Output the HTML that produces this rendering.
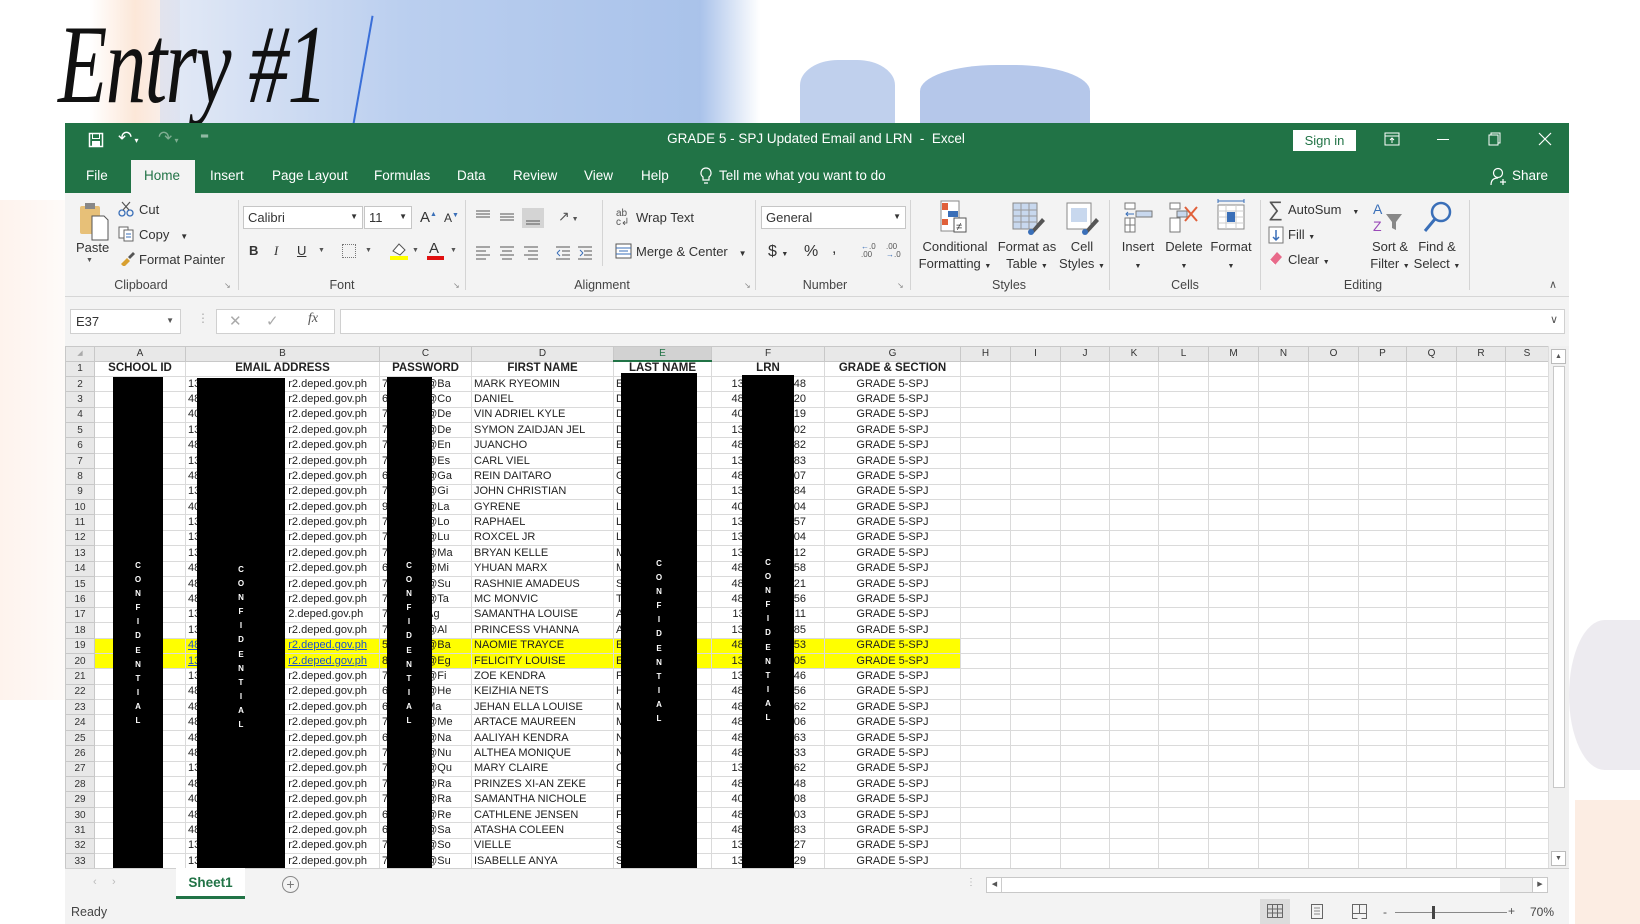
<!DOCTYPE html>
<html><head><meta charset="utf-8"><style>
*{margin:0;padding:0;box-sizing:border-box}
body{width:1640px;height:924px;overflow:hidden;background:#fff;font-family:"Liberation Sans",sans-serif;position:relative;color:#222}
.a{position:absolute;white-space:nowrap}
.ui{font-size:13px;color:#333}
.lbl{font-size:12.5px;color:#444;transform:translateX(-50%)}
.sep{position:absolute;width:1px;background:#d4d4d4;top:200px;height:90px}
.ct{text-align:center;transform:translateX(-50%);font-size:13px;color:#333;line-height:17px}
table{position:absolute;left:65px;top:346px;border-collapse:collapse;table-layout:fixed;font-size:11px;font-family:"Liberation Sans",sans-serif}
td,th{height:15.4px;border:1px solid #dadada;padding:0 2px;overflow:hidden;white-space:nowrap;line-height:13px}
th{background:#e8e8e8;font-weight:normal;font-size:10px;color:#333;border-color:#c8c8c8}
thead th{text-align:center;height:14px}
tbody th{text-align:center}
td.g{text-align:center}
td.f{text-align:right;padding-right:18px}
.s1{display:inline-block;width:88px}
.s2{display:inline-block;width:38px}
.s3{display:inline-block;width:50px}
tr.h1 td{font-weight:bold;text-align:center;font-size:11.5px}
tr.y td:nth-child(n+2):nth-child(-n+8){background:#ffff00}
tr.y td:nth-child(3){color:#1a4fd0;text-decoration:underline}
.blk{position:absolute;background:#000}
.cf{position:absolute;color:#fff;font-size:8px;font-weight:bold;width:10px;text-align:center;line-height:14.1px}
</style></head><body>
<!-- background decor -->
<div class="a" style="left:90px;top:0;width:90px;height:123px;background:linear-gradient(90deg,rgba(250,220,200,.0),rgba(250,215,190,.6),rgba(240,225,225,.4))"></div>
<div class="a" style="left:160px;top:0;width:600px;height:123px;background:linear-gradient(90deg,rgba(210,220,240,.6),rgba(170,195,235,.8) 40%,rgba(160,188,232,.9) 90%,rgba(190,205,235,0))"></div>
<div class="a" style="left:800px;top:60px;width:95px;height:63px;background:rgba(165,188,230,.7);border-radius:40% 40% 0 0"></div>
<div class="a" style="left:920px;top:65px;width:170px;height:58px;background:rgba(150,175,225,.7);border-radius:45% 45% 0 0"></div>
<div class="a" style="left:0;top:200px;width:66px;height:500px;background:linear-gradient(90deg,rgba(250,215,195,.3),rgba(250,215,195,.1))"></div>
<div class="a" style="left:1569px;top:620px;width:71px;height:150px;background:rgba(220,215,225,.5);border-radius:50% 0 0 50%"></div>
<div class="a" style="left:1575px;top:800px;width:65px;height:124px;background:rgba(250,220,200,.5)"></div>
<div class="a" style="left:58px;top:5px;font-family:'Liberation Serif',serif;font-style:italic;font-size:112px;line-height:120px;color:#111;transform:scaleX(.72);transform-origin:left;letter-spacing:-2px">Entry #1</div>
<div class="a" style="left:362px;top:15px;width:2px;height:110px;background:#3a6fd8;transform:rotate(10deg)"></div>

<!-- title bar -->
<div class="a" style="left:65px;top:123px;width:1504px;height:70px;background:#217346"></div>
<div class="a" style="left:131px;top:160px;width:64px;height:34px;background:#f3f3f3"></div>
<div class="a" style="left:65px;top:193px;width:1504px;height:104px;background:#f3f3f3;border-bottom:1px solid #d6d6d6"></div>
<svg class="a" style="left:88px;top:132px" width="16" height="16"><rect x="1.5" y="1.5" width="13" height="13" fill="none" stroke="#fff" stroke-width="1.5"/><rect x="4.5" y="1.5" width="7" height="5" fill="none" stroke="#fff"/><rect x="4" y="9" width="8" height="5" fill="#fff"/></svg>
<div class="a" style="left:118px;top:128px;color:#fff;font-size:17px">&#x21B6;<span style="font-size:8px"> ▾</span></div>
<div class="a" style="left:158px;top:128px;color:#7fae92;font-size:17px">&#x21B7;<span style="font-size:8px"> ▾</span></div>
<div class="a" style="left:201px;top:131px;color:#fff;font-size:10px">&#x2550;</div>
<div class="a" style="left:816px;top:131px;color:#fff;font-size:13.5px;transform:translateX(-50%)">GRADE 5 - SPJ Updated Email and LRN&nbsp; -&nbsp; Excel</div>
<div class="a" style="left:1293px;top:130px;width:63px;height:21px;background:#fff;color:#217346;font-size:13px;text-align:center;line-height:21px">Sign in</div>
<svg class="a" style="left:1384px;top:132px" width="16" height="14"><rect x="1" y="1" width="14" height="12" fill="none" stroke="#fff"/><line x1="1" y1="4" x2="15" y2="4" stroke="#fff"/><path d="M8 11V6M6 8l2-2 2 2" stroke="#fff" fill="none"/></svg>
<div class="a" style="left:1437px;top:139px;width:12px;height:1px;background:#fff"></div>
<svg class="a" style="left:1488px;top:132px" width="14" height="14"><rect x="1" y="3" width="9" height="10" fill="none" stroke="#fff"/><path d="M3 3V1h9v10h-2" fill="none" stroke="#fff"/></svg>
<svg class="a" style="left:1538px;top:132px" width="14" height="14"><path d="M1 1L13 13M13 1L1 13" stroke="#fff" stroke-width="1.2"/></svg>
<div class="a" style="left:86px;top:168px;color:#fff;font-size:13.5px">File</div>
<div class="a" style="left:144px;top:168px;color:#217346;font-size:13.5px">Home</div>
<div class="a" style="left:210px;top:168px;color:#fff;font-size:13.5px">Insert</div>
<div class="a" style="left:272px;top:168px;color:#fff;font-size:13.5px">Page Layout</div>
<div class="a" style="left:374px;top:168px;color:#fff;font-size:13.5px">Formulas</div>
<div class="a" style="left:457px;top:168px;color:#fff;font-size:13.5px">Data</div>
<div class="a" style="left:513px;top:168px;color:#fff;font-size:13.5px">Review</div>
<div class="a" style="left:584px;top:168px;color:#fff;font-size:13.5px">View</div>
<div class="a" style="left:641px;top:168px;color:#fff;font-size:13.5px">Help</div>
<svg class="a" style="left:699px;top:167px" width="14" height="19"><path d="M7 1a5 5 0 0 0-3 9v3h6v-3a5 5 0 0 0-3-9zM5 16h4" fill="none" stroke="#fff" stroke-width="1.2"/></svg>
<div class="a" style="left:719px;top:168px;color:#fff;font-size:13.5px">Tell me what you want to do</div>
<svg class="a" style="left:1490px;top:167px" width="18" height="19"><circle cx="8" cy="6" r="4.5" fill="none" stroke="#fff" stroke-width="1.2"/><path d="M1 18c0-5 3-7 7-7M13 12v6M10 15h6" fill="none" stroke="#fff" stroke-width="1.2"/></svg>
<div class="a" style="left:1512px;top:168px;color:#fff;font-size:13.5px">Share</div>

<!-- ribbon: clipboard -->
<svg class="a" style="left:78px;top:202px" width="32" height="40"><rect x="2" y="4" width="20" height="28" rx="2" fill="#e7c078"/><rect x="7" y="1" width="10" height="6" fill="#888"/><path d="M14 14h12l4 4v20H14z" fill="#fff" stroke="#555"/></svg>
<div class="a ui" style="left:76px;top:240px">Paste</div>
<div class="a" style="left:86px;top:257px;font-size:7px;color:#555">▼</div>
<svg class="a" style="left:118px;top:201px" width="16" height="16"><circle cx="4" cy="12" r="3" fill="none" stroke="#3a6fb8" stroke-width="1.3"/><circle cx="12" cy="12" r="3" fill="none" stroke="#3a6fb8" stroke-width="1.3"/><path d="M5 9L12 1M11 9L4 1" stroke="#555" stroke-width="1.2"/></svg>
<div class="a ui" style="left:139px;top:202px">Cut</div>
<svg class="a" style="left:118px;top:226px" width="16" height="16"><rect x="1" y="1" width="9" height="11" fill="#fff" stroke="#666"/><rect x="6" y="4" width="9" height="11" fill="#fff" stroke="#666"/><path d="M8 8h5M8 11h5" stroke="#3a6fb8"/></svg>
<div class="a ui" style="left:139px;top:227px">Copy&nbsp;&nbsp; <span style="font-size:8px">▼</span></div>
<svg class="a" style="left:119px;top:250px" width="16" height="16"><path d="M2 14l6-6 3 3-6 6z" fill="#d8a030"/><path d="M9 7l5-5 2 2-5 5z" fill="#555"/></svg>
<div class="a ui" style="left:139px;top:252px">Format Painter</div>
<div class="a lbl" style="left:141px;top:278px">Clipboard</div>
<div class="a" style="left:224px;top:281px;font-size:8px;color:#888">&#x2198;</div>
<div class="sep" style="left:238px"></div>
<!-- font -->
<div class="a" style="left:243px;top:206px;width:120px;height:23px;background:#fff;border:1px solid #c6c6c6;font-size:13px;padding:3px 4px;color:#333">Calibri<span style="position:absolute;right:4px;top:5px;font-size:8px">▼</span></div>
<div class="a" style="left:364px;top:206px;width:48px;height:23px;background:#fff;border:1px solid #c6c6c6;font-size:13px;padding:3px 4px;color:#333">11<span style="position:absolute;right:4px;top:5px;font-size:8px">▼</span></div>
<div class="a ui" style="left:420px;top:209px;font-size:15px">A<sup style="font-size:7px;color:#3a6fb8">▲</sup></div>
<div class="a ui" style="left:444px;top:211px;font-size:12px">A<sup style="font-size:7px;color:#3a6fb8">▼</sup></div>
<div class="a ui" style="left:249px;top:243px;font-weight:bold">B</div>
<div class="a ui" style="left:274px;top:243px;font-style:italic;font-family:'Liberation Serif'">I</div>
<div class="a ui" style="left:297px;top:243px;text-decoration:underline">U</div>
<div class="a" style="left:318px;top:247px;font-size:7px;color:#555">▼</div>
<div class="a" style="left:342px;top:244px;width:14px;height:14px;border:1px dotted #777"></div>
<div class="a" style="left:365px;top:247px;font-size:7px;color:#555">▼</div>
<svg class="a" style="left:389px;top:241px" width="20" height="20"><path d="M4 10l6-7 6 6-5 5z" fill="#fff" stroke="#555"/><rect x="1" y="15" width="18" height="4" fill="#ffff00"/></svg>
<div class="a" style="left:412px;top:247px;font-size:7px;color:#555">▼</div>
<div class="a ui" style="left:429px;top:240px;font-size:15px">A</div>
<div class="a" style="left:427px;top:256px;width:17px;height:4px;background:#e01010"></div>
<div class="a" style="left:450px;top:247px;font-size:7px;color:#555">▼</div>
<div class="a lbl" style="left:342px;top:278px">Font</div>
<div class="a" style="left:453px;top:281px;font-size:8px;color:#888">&#x2198;</div>
<div class="sep" style="left:465px"></div>
<!-- alignment -->
<svg class="a" style="left:474px;top:207px" width="90" height="22"><g stroke="#555"><path d="M2 4h14M2 7h14M2 10h14M26 7h14M26 10h14M26 13h14"/></g><rect x="48" y="1" width="22" height="20" fill="#d4d4d4"/><path d="M52 14h14M52 17h14" stroke="#555"/></svg>
<div class="a ui" style="left:558px;top:208px;font-size:14px;color:#555">&#x2197;<span style="font-size:7px"> ▼</span></div>
<svg class="a" style="left:474px;top:244px" width="130" height="16"><g stroke="#555"><path d="M2 3h14M2 7h10M2 11h14M2 15h10M26 3h14M28 7h10M26 11h14M28 15h10M50 3h14M54 7h10M50 11h14M54 15h10"/><path d="M82 3h14M88 7h8M88 11h8M82 15h14M104 3h14M110 7h8M110 11h8M104 15h14"/><path d="M83 9l3-3M83 9l3 3M109 9l-3-3M109 9l-3 3" stroke="#3a6fb8"/></g></svg>
<div class="sep" style="left:602px;top:200px;height:66px"></div>
<div class="a ui" style="left:616px;top:209px;font-size:10px;line-height:9px;color:#555">ab<br>c&#x21B2;</div>
<div class="a ui" style="left:636px;top:210px">Wrap Text</div>
<svg class="a" style="left:615px;top:243px" width="17" height="16"><rect x="1" y="1" width="15" height="14" fill="#fff" stroke="#555"/><path d="M1 5h15M1 11h15M4 8h9" stroke="#3a6fb8"/></svg>
<div class="a ui" style="left:636px;top:244px">Merge &amp; Center&nbsp;&nbsp; <span style="font-size:8px">▼</span></div>
<div class="a lbl" style="left:602px;top:278px">Alignment</div>
<div class="a" style="left:744px;top:281px;font-size:8px;color:#888">&#x2198;</div>
<div class="sep" style="left:755px"></div>
<!-- number -->
<div class="a" style="left:761px;top:206px;width:145px;height:23px;background:#fff;border:1px solid #c6c6c6;font-size:13px;padding:3px 4px;color:#333">General<span style="position:absolute;right:4px;top:5px;font-size:8px">▼</span></div>
<div class="a ui" style="left:768px;top:243px;font-size:16px">$ <span style="font-size:7px">▼</span></div>
<div class="a ui" style="left:804px;top:243px;font-size:16px">%</div>
<div class="a ui" style="left:832px;top:240px;font-size:16px">,</div>
<div class="a" style="left:861px;top:243px;font-size:8px;line-height:8px;color:#555"><span style="color:#3a6fb8">&#x2190;</span>.0<br>.00</div>
<div class="a" style="left:886px;top:243px;font-size:8px;line-height:8px;color:#555">.00<br><span style="color:#3a6fb8">&#x2192;</span>.0</div>
<div class="a lbl" style="left:825px;top:278px">Number</div>
<div class="a" style="left:897px;top:281px;font-size:8px;color:#888">&#x2198;</div>
<div class="sep" style="left:910px"></div>
<!-- styles -->
<svg class="a" style="left:940px;top:200px" width="32" height="36"><g fill="#fff" stroke="#888"><rect x="1" y="1" width="18" height="30"/></g><rect x="2" y="3" width="6" height="7" fill="#e0603a"/><rect x="8" y="11" width="10" height="6" fill="#3a6fb8"/><rect x="2" y="19" width="6" height="6" fill="#e0603a"/><rect x="14" y="18" width="12" height="14" fill="#fff" stroke="#555"/><text x="16" y="30" font-size="11" fill="#333">&#x2260;</text></svg>
<div class="a ct" style="left:955px;top:238px">Conditional<br>Formatting <span style="font-size:7px">▼</span></div>
<svg class="a" style="left:1012px;top:202px" width="34" height="34"><rect x="1" y="1" width="24" height="26" fill="#c8d8ee" stroke="#888"/><path d="M1 8h24M1 14h24M1 20h24M9 1v26M17 1v26" stroke="#999"/><path d="M18 30l12-14 3 3-12 13z" fill="#555"/><circle cx="19" cy="30" r="3" fill="#3a6fb8"/></svg>
<div class="a ct" style="left:1027px;top:238px">Format as<br>Table <span style="font-size:7px">▼</span></div>
<svg class="a" style="left:1066px;top:202px" width="34" height="34"><rect x="1" y="1" width="24" height="26" fill="#fff" stroke="#888"/><rect x="5" y="6" width="16" height="14" fill="#c8d8ee"/><path d="M18 30l12-14 3 3-12 13z" fill="#555"/><circle cx="19" cy="30" r="3" fill="#3a6fb8"/></svg>
<div class="a ct" style="left:1082px;top:238px">Cell<br>Styles <span style="font-size:7px">▼</span></div>
<div class="a lbl" style="left:1009px;top:278px">Styles</div>
<div class="sep" style="left:1109px"></div>
<!-- cells -->
<svg class="a" style="left:1124px;top:202px" width="30" height="32"><g fill="#fff" stroke="#777"><rect x="1" y="1" width="10" height="6"/><rect x="1" y="16" width="10" height="14"/><rect x="12" y="9" width="16" height="6" fill="#c8d8ee"/></g><path d="M1 23h10M6 16v14" stroke="#777"/><path d="M2 12h8M4 10l-2 2 2 2" stroke="#3a6fb8" fill="none"/></svg>
<div class="a ct" style="left:1138px;top:238px">Insert<br><span style="font-size:7px">▼</span></div>
<svg class="a" style="left:1169px;top:202px" width="32" height="32"><g fill="#fff" stroke="#777"><rect x="1" y="1" width="10" height="6"/><rect x="1" y="16" width="10" height="14"/><rect x="8" y="9" width="10" height="6" fill="#c8d8ee"/></g><path d="M16 5l12 14M28 5L16 19" stroke="#e0603a" stroke-width="2"/></svg>
<div class="a ct" style="left:1184px;top:238px">Delete<br><span style="font-size:7px">▼</span></div>
<svg class="a" style="left:1216px;top:198px" width="30" height="36"><path d="M2 3h26M2 1v4M28 1v4M6 3l-3 0" stroke="#3a6fb8"/><rect x="2" y="7" width="26" height="24" fill="#fff" stroke="#888"/><path d="M2 13h26M2 19h26M2 25h26M10 7v24M20 7v24" stroke="#ccc"/><rect x="11" y="14" width="8" height="10" fill="#3a6fb8"/></svg>
<div class="a ct" style="left:1231px;top:238px">Format<br><span style="font-size:7px">▼</span></div>
<div class="a lbl" style="left:1185px;top:278px">Cells</div>
<div class="sep" style="left:1260px"></div>
<!-- editing -->
<div class="a" style="left:1268px;top:198px;font-size:21px;color:#555">&#x2211;</div>
<div class="a ui" style="left:1288px;top:202px">AutoSum&nbsp;&nbsp; <span style="font-size:7px">▼</span></div>
<svg class="a" style="left:1268px;top:226px" width="16" height="18"><rect x="1" y="1" width="14" height="16" fill="#fff" stroke="#777"/><path d="M8 4v10M5 11l3 3 3-3" stroke="#3a6fb8" fill="none" stroke-width="1.5"/></svg>
<div class="a ui" style="left:1288px;top:227px">Fill <span style="font-size:7px">▼</span></div>
<svg class="a" style="left:1268px;top:250px" width="16" height="16"><path d="M2 10l7-8 5 5-7 8z" fill="#e86a8a"/><path d="M2 10l5 5" stroke="#fff"/></svg>
<div class="a ui" style="left:1288px;top:252px">Clear <span style="font-size:7px">▼</span></div>
<svg class="a" style="left:1372px;top:200px" width="34" height="34"><text x="1" y="14" font-size="14" fill="#3a6fb8" font-family="Liberation Sans">A</text><text x="1" y="31" font-size="14" fill="#9a4ab8" font-family="Liberation Sans">Z</text><path d="M14 14h16l-6 8v8l-4-2v-6z" fill="#888"/></svg>
<div class="a ct" style="left:1390px;top:238px">Sort &amp;<br>Filter <span style="font-size:7px">▼</span></div>
<svg class="a" style="left:1422px;top:200px" width="32" height="34"><circle cx="19" cy="12" r="9" fill="none" stroke="#3a6fb8" stroke-width="2.5"/><path d="M13 19L3 31" stroke="#3a6fb8" stroke-width="3"/></svg>
<div class="a ct" style="left:1437px;top:238px">Find &amp;<br>Select <span style="font-size:7px">▼</span></div>
<div class="a lbl" style="left:1363px;top:278px">Editing</div>
<div class="sep" style="left:1469px"></div>
<div class="a" style="left:1549px;top:278px;font-size:11px;color:#555">&#x2227;</div>

<!-- formula bar -->
<div class="a" style="left:65px;top:297px;width:1504px;height:49px;background:#f3f3f3"></div>
<div class="a" style="left:70px;top:309px;width:111px;height:25px;background:#fff;border:1px solid #d0d0d0;font-size:13px;padding:4px 5px;color:#333">E37<span style="position:absolute;right:6px;top:6px;font-size:8px;color:#555">▼</span></div>
<div class="a" style="left:197px;top:311px;font-size:12px;color:#aaa">&#x22EE;</div>
<div class="a" style="left:216px;top:309px;width:119px;height:25px;background:#fff;border:1px solid #d0d0d0"></div>
<div class="a" style="left:229px;top:312px;font-size:15px;color:#aaa">&#x2715;</div>
<div class="a" style="left:266px;top:312px;font-size:15px;color:#aaa">&#x2713;</div>
<div class="a" style="left:308px;top:311px;font-size:14px;color:#555;font-family:'Liberation Serif';font-style:italic">fx</div>
<div class="a" style="left:340px;top:309px;width:1225px;height:25px;background:#fff;border:1px solid #d0d0d0"></div>
<div class="a" style="left:1550px;top:313px;font-size:11px;color:#555">&#x2228;</div>

<!-- grid -->
<div class="a" style="left:65px;top:346px;width:1504px;height:522px;background:#fff"></div>
<table>
<colgroup><col style="width:29px"><col style="width:91px"><col style="width:194px"><col style="width:92px"><col style="width:142px"><col style="width:98px"><col style="width:113px"><col style="width:136px"><col style="width:50px"><col style="width:50px"><col style="width:49px"><col style="width:49px"><col style="width:50px"><col style="width:50px"><col style="width:50px"><col style="width:50px"><col style="width:48px"><col style="width:50px"><col style="width:49px"><col style="width:43px"></colgroup>
<thead><tr><th style="font-size:7px;color:#aaa">&#x25E2;</th><th>A</th><th>B</th><th>C</th><th>D</th><th style="background:#d2d2d2;border-bottom:2px solid #217346;color:#217346">E</th><th>F</th><th>G</th><th>H</th><th>I</th><th>J</th><th>K</th><th>L</th><th>M</th><th>N</th><th>O</th><th>P</th><th>Q</th><th>R</th><th>S</th></tr></thead>
<tbody>
<tr class="h1"><th>1</th><td>SCHOOL ID</td><td>EMAIL ADDRESS</td><td>PASSWORD</td><td>FIRST NAME</td><td>LAST NAME</td><td>LRN</td><td>GRADE &amp; SECTION</td><td></td><td></td><td></td><td></td><td></td><td></td><td></td><td></td><td></td><td></td><td></td><td></td></tr>
<tr><th>2</th><td></td><td>13<span class="s1"></span>r2.deped.gov.ph</td><td>7<span class="s2"></span>@Ba</td><td>MARK RYEOMIN</td><td>E</td><td class="f">13<span class="s3"></span>48</td><td class="g">GRADE 5-SPJ</td><td></td><td></td><td></td><td></td><td></td><td></td><td></td><td></td><td></td><td></td><td></td><td></td></tr>
<tr><th>3</th><td></td><td>48<span class="s1"></span>r2.deped.gov.ph</td><td>6<span class="s2"></span>@Co</td><td>DANIEL</td><td>D</td><td class="f">48<span class="s3"></span>20</td><td class="g">GRADE 5-SPJ</td><td></td><td></td><td></td><td></td><td></td><td></td><td></td><td></td><td></td><td></td><td></td><td></td></tr>
<tr><th>4</th><td></td><td>40<span class="s1"></span>r2.deped.gov.ph</td><td>7<span class="s2"></span>@De</td><td>VIN ADRIEL KYLE</td><td>D</td><td class="f">40<span class="s3"></span>19</td><td class="g">GRADE 5-SPJ</td><td></td><td></td><td></td><td></td><td></td><td></td><td></td><td></td><td></td><td></td><td></td><td></td></tr>
<tr><th>5</th><td></td><td>13<span class="s1"></span>r2.deped.gov.ph</td><td>7<span class="s2"></span>@De</td><td>SYMON ZAIDJAN JEL</td><td>D</td><td class="f">13<span class="s3"></span>02</td><td class="g">GRADE 5-SPJ</td><td></td><td></td><td></td><td></td><td></td><td></td><td></td><td></td><td></td><td></td><td></td><td></td></tr>
<tr><th>6</th><td></td><td>48<span class="s1"></span>r2.deped.gov.ph</td><td>7<span class="s2"></span>@En</td><td>JUANCHO</td><td>E</td><td class="f">48<span class="s3"></span>82</td><td class="g">GRADE 5-SPJ</td><td></td><td></td><td></td><td></td><td></td><td></td><td></td><td></td><td></td><td></td><td></td><td></td></tr>
<tr><th>7</th><td></td><td>13<span class="s1"></span>r2.deped.gov.ph</td><td>7<span class="s2"></span>@Es</td><td>CARL VIEL</td><td>E</td><td class="f">13<span class="s3"></span>83</td><td class="g">GRADE 5-SPJ</td><td></td><td></td><td></td><td></td><td></td><td></td><td></td><td></td><td></td><td></td><td></td><td></td></tr>
<tr><th>8</th><td></td><td>48<span class="s1"></span>r2.deped.gov.ph</td><td>6<span class="s2"></span>@Ga</td><td>REIN DAITARO</td><td>G</td><td class="f">48<span class="s3"></span>07</td><td class="g">GRADE 5-SPJ</td><td></td><td></td><td></td><td></td><td></td><td></td><td></td><td></td><td></td><td></td><td></td><td></td></tr>
<tr><th>9</th><td></td><td>13<span class="s1"></span>r2.deped.gov.ph</td><td>7<span class="s2"></span>@Gi</td><td>JOHN CHRISTIAN</td><td>G</td><td class="f">13<span class="s3"></span>84</td><td class="g">GRADE 5-SPJ</td><td></td><td></td><td></td><td></td><td></td><td></td><td></td><td></td><td></td><td></td><td></td><td></td></tr>
<tr><th>10</th><td></td><td>40<span class="s1"></span>r2.deped.gov.ph</td><td>9<span class="s2"></span>@La</td><td>GYRENE</td><td>L</td><td class="f">40<span class="s3"></span>04</td><td class="g">GRADE 5-SPJ</td><td></td><td></td><td></td><td></td><td></td><td></td><td></td><td></td><td></td><td></td><td></td><td></td></tr>
<tr><th>11</th><td></td><td>13<span class="s1"></span>r2.deped.gov.ph</td><td>7<span class="s2"></span>@Lo</td><td>RAPHAEL</td><td>L</td><td class="f">13<span class="s3"></span>57</td><td class="g">GRADE 5-SPJ</td><td></td><td></td><td></td><td></td><td></td><td></td><td></td><td></td><td></td><td></td><td></td><td></td></tr>
<tr><th>12</th><td></td><td>13<span class="s1"></span>r2.deped.gov.ph</td><td>7<span class="s2"></span>@Lu</td><td>ROXCEL JR</td><td>L</td><td class="f">13<span class="s3"></span>04</td><td class="g">GRADE 5-SPJ</td><td></td><td></td><td></td><td></td><td></td><td></td><td></td><td></td><td></td><td></td><td></td><td></td></tr>
<tr><th>13</th><td></td><td>13<span class="s1"></span>r2.deped.gov.ph</td><td>7<span class="s2"></span>@Ma</td><td>BRYAN KELLE</td><td>M</td><td class="f">13<span class="s3"></span>12</td><td class="g">GRADE 5-SPJ</td><td></td><td></td><td></td><td></td><td></td><td></td><td></td><td></td><td></td><td></td><td></td><td></td></tr>
<tr><th>14</th><td></td><td>48<span class="s1"></span>r2.deped.gov.ph</td><td>6<span class="s2"></span>@Mi</td><td>YHUAN MARX</td><td>M</td><td class="f">48<span class="s3"></span>58</td><td class="g">GRADE 5-SPJ</td><td></td><td></td><td></td><td></td><td></td><td></td><td></td><td></td><td></td><td></td><td></td><td></td></tr>
<tr><th>15</th><td></td><td>48<span class="s1"></span>r2.deped.gov.ph</td><td>7<span class="s2"></span>@Su</td><td>RASHNIE AMADEUS</td><td>S</td><td class="f">48<span class="s3"></span>21</td><td class="g">GRADE 5-SPJ</td><td></td><td></td><td></td><td></td><td></td><td></td><td></td><td></td><td></td><td></td><td></td><td></td></tr>
<tr><th>16</th><td></td><td>48<span class="s1"></span>r2.deped.gov.ph</td><td>7<span class="s2"></span>@Ta</td><td>MC MONVIC</td><td>T</td><td class="f">48<span class="s3"></span>56</td><td class="g">GRADE 5-SPJ</td><td></td><td></td><td></td><td></td><td></td><td></td><td></td><td></td><td></td><td></td><td></td><td></td></tr>
<tr><th>17</th><td></td><td>13<span class="s1"></span>2.deped.gov.ph</td><td>7<span class="s2"></span>Ag</td><td>SAMANTHA LOUISE</td><td>A</td><td class="f">13<span class="s3"></span>11</td><td class="g">GRADE 5-SPJ</td><td></td><td></td><td></td><td></td><td></td><td></td><td></td><td></td><td></td><td></td><td></td><td></td></tr>
<tr><th>18</th><td></td><td>13<span class="s1"></span>r2.deped.gov.ph</td><td>7<span class="s2"></span>@Al</td><td>PRINCESS VHANNA</td><td>A</td><td class="f">13<span class="s3"></span>85</td><td class="g">GRADE 5-SPJ</td><td></td><td></td><td></td><td></td><td></td><td></td><td></td><td></td><td></td><td></td><td></td><td></td></tr>
<tr class="y"><th>19</th><td></td><td>48<span class="s1"></span>r2.deped.gov.ph</td><td>5<span class="s2"></span>@Ba</td><td>NAOMIE TRAYCE</td><td>E</td><td class="f">48<span class="s3"></span>53</td><td class="g">GRADE 5-SPJ</td><td></td><td></td><td></td><td></td><td></td><td></td><td></td><td></td><td></td><td></td><td></td><td></td></tr>
<tr class="y"><th>20</th><td></td><td>13<span class="s1"></span>r2.deped.gov.ph</td><td>8<span class="s2"></span>@Eg</td><td>FELICITY LOUISE</td><td>E</td><td class="f">13<span class="s3"></span>05</td><td class="g">GRADE 5-SPJ</td><td></td><td></td><td></td><td></td><td></td><td></td><td></td><td></td><td></td><td></td><td></td><td></td></tr>
<tr><th>21</th><td></td><td>13<span class="s1"></span>r2.deped.gov.ph</td><td>7<span class="s2"></span>@Fi</td><td>ZOE KENDRA</td><td>F</td><td class="f">13<span class="s3"></span>46</td><td class="g">GRADE 5-SPJ</td><td></td><td></td><td></td><td></td><td></td><td></td><td></td><td></td><td></td><td></td><td></td><td></td></tr>
<tr><th>22</th><td></td><td>48<span class="s1"></span>r2.deped.gov.ph</td><td>6<span class="s2"></span>@He</td><td>KEIZHIA NETS</td><td>H</td><td class="f">48<span class="s3"></span>56</td><td class="g">GRADE 5-SPJ</td><td></td><td></td><td></td><td></td><td></td><td></td><td></td><td></td><td></td><td></td><td></td><td></td></tr>
<tr><th>23</th><td></td><td>48<span class="s1"></span>r2.deped.gov.ph</td><td>6<span class="s2"></span>Ma</td><td>JEHAN ELLA LOUISE</td><td>M</td><td class="f">48<span class="s3"></span>62</td><td class="g">GRADE 5-SPJ</td><td></td><td></td><td></td><td></td><td></td><td></td><td></td><td></td><td></td><td></td><td></td><td></td></tr>
<tr><th>24</th><td></td><td>48<span class="s1"></span>r2.deped.gov.ph</td><td>7<span class="s2"></span>@Me</td><td>ARTACE MAUREEN</td><td>M</td><td class="f">48<span class="s3"></span>06</td><td class="g">GRADE 5-SPJ</td><td></td><td></td><td></td><td></td><td></td><td></td><td></td><td></td><td></td><td></td><td></td><td></td></tr>
<tr><th>25</th><td></td><td>48<span class="s1"></span>r2.deped.gov.ph</td><td>6<span class="s2"></span>@Na</td><td>AALIYAH KENDRA</td><td>N</td><td class="f">48<span class="s3"></span>63</td><td class="g">GRADE 5-SPJ</td><td></td><td></td><td></td><td></td><td></td><td></td><td></td><td></td><td></td><td></td><td></td><td></td></tr>
<tr><th>26</th><td></td><td>48<span class="s1"></span>r2.deped.gov.ph</td><td>7<span class="s2"></span>@Nu</td><td>ALTHEA MONIQUE</td><td>N</td><td class="f">48<span class="s3"></span>33</td><td class="g">GRADE 5-SPJ</td><td></td><td></td><td></td><td></td><td></td><td></td><td></td><td></td><td></td><td></td><td></td><td></td></tr>
<tr><th>27</th><td></td><td>13<span class="s1"></span>r2.deped.gov.ph</td><td>7<span class="s2"></span>@Qu</td><td>MARY CLAIRE</td><td>C</td><td class="f">13<span class="s3"></span>62</td><td class="g">GRADE 5-SPJ</td><td></td><td></td><td></td><td></td><td></td><td></td><td></td><td></td><td></td><td></td><td></td><td></td></tr>
<tr><th>28</th><td></td><td>48<span class="s1"></span>r2.deped.gov.ph</td><td>7<span class="s2"></span>@Ra</td><td>PRINZES XI-AN ZEKE</td><td>F</td><td class="f">48<span class="s3"></span>48</td><td class="g">GRADE 5-SPJ</td><td></td><td></td><td></td><td></td><td></td><td></td><td></td><td></td><td></td><td></td><td></td><td></td></tr>
<tr><th>29</th><td></td><td>40<span class="s1"></span>r2.deped.gov.ph</td><td>7<span class="s2"></span>@Ra</td><td>SAMANTHA NICHOLE</td><td>F</td><td class="f">40<span class="s3"></span>08</td><td class="g">GRADE 5-SPJ</td><td></td><td></td><td></td><td></td><td></td><td></td><td></td><td></td><td></td><td></td><td></td><td></td></tr>
<tr><th>30</th><td></td><td>48<span class="s1"></span>r2.deped.gov.ph</td><td>6<span class="s2"></span>@Re</td><td>CATHLENE JENSEN</td><td>F</td><td class="f">48<span class="s3"></span>03</td><td class="g">GRADE 5-SPJ</td><td></td><td></td><td></td><td></td><td></td><td></td><td></td><td></td><td></td><td></td><td></td><td></td></tr>
<tr><th>31</th><td></td><td>48<span class="s1"></span>r2.deped.gov.ph</td><td>6<span class="s2"></span>@Sa</td><td>ATASHA COLEEN</td><td>S</td><td class="f">48<span class="s3"></span>83</td><td class="g">GRADE 5-SPJ</td><td></td><td></td><td></td><td></td><td></td><td></td><td></td><td></td><td></td><td></td><td></td><td></td></tr>
<tr><th>32</th><td></td><td>13<span class="s1"></span>r2.deped.gov.ph</td><td>7<span class="s2"></span>@So</td><td>VIELLE</td><td>S</td><td class="f">13<span class="s3"></span>27</td><td class="g">GRADE 5-SPJ</td><td></td><td></td><td></td><td></td><td></td><td></td><td></td><td></td><td></td><td></td><td></td><td></td></tr>
<tr><th>33</th><td></td><td>13<span class="s1"></span>r2.deped.gov.ph</td><td>7<span class="s2"></span>@Su</td><td>ISABELLE ANYA</td><td>S</td><td class="f">13<span class="s3"></span>29</td><td class="g">GRADE 5-SPJ</td><td></td><td></td><td></td><td></td><td></td><td></td><td></td><td></td><td></td><td></td><td></td><td></td></tr>
</tbody></table>
<!-- redactions -->
<div class="blk" style="left:113px;top:377px;width:50px;height:491px"></div>
<div class="blk" style="left:197px;top:378px;width:88px;height:490px"></div>
<div class="blk" style="left:387px;top:377px;width:45px;height:491px"></div>
<div class="blk" style="left:621px;top:373px;width:76px;height:495px"></div>
<div class="blk" style="left:742px;top:375px;width:52px;height:493px"></div>
<div class="cf" style="left:133px;top:559px">C<br>O<br>N<br>F<br>I<br>D<br>E<br>N<br>T<br>I<br>A<br>L</div>
<div class="cf" style="left:236px;top:563px">C<br>O<br>N<br>F<br>I<br>D<br>E<br>N<br>T<br>I<br>A<br>L</div>
<div class="cf" style="left:404px;top:559px">C<br>O<br>N<br>F<br>I<br>D<br>E<br>N<br>T<br>I<br>A<br>L</div>
<div class="cf" style="left:654px;top:557px">C<br>O<br>N<br>F<br>I<br>D<br>E<br>N<br>T<br>I<br>A<br>L</div>
<div class="cf" style="left:763px;top:556px">C<br>O<br>N<br>F<br>I<br>D<br>E<br>N<br>T<br>I<br>A<br>L</div>
<!-- vertical scrollbar -->
<div class="a" style="left:1548px;top:346px;width:21px;height:522px;background:#f0f0f0;border-left:1px solid #ddd"></div>
<div class="a" style="left:1551px;top:349px;width:15px;height:15px;background:#fff;border:1px solid #bbb;font-size:7px;text-align:center;line-height:13px;color:#555">▲</div>
<div class="a" style="left:1553px;top:366px;width:12px;height:422px;background:#fff;border:1px solid #c8c8c8"></div>
<div class="a" style="left:1551px;top:851px;width:15px;height:15px;background:#fff;border:1px solid #bbb;font-size:7px;text-align:center;line-height:13px;color:#555">▼</div>
<!-- sheet tabs -->
<div class="a" style="left:65px;top:868px;width:1504px;height:31px;background:#f3f3f3;border-top:1px solid #d0d0d0"></div>
<div class="a" style="left:93px;top:876px;font-size:11px;color:#bbb">&#x2039;&nbsp;&nbsp;&nbsp;&nbsp; &#x203A;</div>
<div class="a" style="left:176px;top:868px;width:69px;height:31px;background:#fff;border-bottom:3px solid #217346;color:#217346;font-weight:bold;font-size:13.5px;text-align:center;line-height:30px">Sheet1</div>
<div class="a" style="left:282px;top:876px;width:17px;height:17px;border:1px solid #888;border-radius:50%;text-align:center;line-height:15px;font-size:14px;color:#777">+</div>
<div class="a" style="left:966px;top:877px;font-size:10px;color:#aaa">&#x22EE;</div>
<div class="a" style="left:986px;top:877px;width:562px;height:16px;background:#fff;border:1px solid #c8c8c8"></div>
<div class="a" style="left:988px;top:878px;width:14px;height:14px;border-right:1px solid #ccc;font-size:7px;text-align:center;line-height:14px;color:#555">◀</div>
<div class="a" style="left:1500px;top:878px;width:38px;height:14px;background:#f0f0f0"></div>
<div class="a" style="left:1532px;top:877px;width:16px;height:16px;background:#fff;border:1px solid #c8c8c8;font-size:7px;text-align:center;line-height:14px;color:#555">▶</div>
<!-- status bar -->
<div class="a" style="left:65px;top:899px;width:1504px;height:25px;background:#f3f3f3"></div>
<div class="a" style="left:71px;top:905px;font-size:12.5px;color:#444">Ready</div>
<div class="a" style="left:1260px;top:899px;width:30px;height:25px;background:#dcdcdc"></div>
<svg class="a" style="left:1267px;top:904px" width="16" height="14"><rect x=".5" y=".5" width="15" height="13" fill="none" stroke="#666"/><path d="M.5 5h15M.5 9h15M5.5 .5v13M10.5 .5v13" stroke="#666"/></svg>
<svg class="a" style="left:1311px;top:904px" width="12" height="15"><rect x=".5" y=".5" width="11" height="14" fill="none" stroke="#666"/><path d="M3 4h6M3 7h6M3 10h6" stroke="#888"/></svg>
<svg class="a" style="left:1352px;top:904px" width="15" height="15"><path d="M.5 .5h14v9h-14zM.5 9.5v5h5M14.5 9.5v5h-5M7.5.5v9" fill="none" stroke="#666"/></svg>
<div class="a" style="left:1383px;top:905px;font-size:12px;color:#555">-</div>
<div class="a" style="left:1395px;top:912px;width:112px;height:1px;background:#888"></div>
<div class="a" style="left:1432px;top:906px;width:3px;height:13px;background:#444"></div>
<div class="a" style="left:1508px;top:904px;font-size:12px;color:#555">+</div>
<div class="a" style="left:1530px;top:905px;font-size:12px;color:#444">70%</div>
</body></html>
